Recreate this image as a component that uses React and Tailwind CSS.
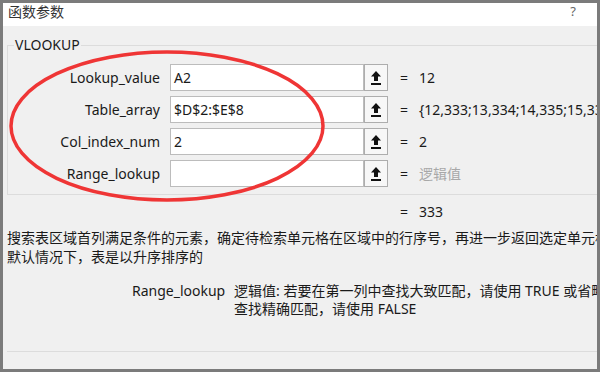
import React from 'react'

const rows = [
  { label: 'Lookup_value', value: 'A2', result: '12' },
  { label: 'Table_array', value: '$D$2:$E$8', result: '{12,333;13,334;14,335;15,336;16,337;17,338;18,339}' },
  { label: 'Col_index_num', value: '2', result: '2' },
  { label: 'Range_lookup', value: '', result: '逻辑值', muted: true },
]

function RefIcon() {
  return (
    <svg width="10" height="14" viewBox="0 0 10 14">
      <path d="M5 0 L10 5.5 L7 5.5 L7 10 L3 10 L3 5.5 L0 5.5 Z" fill="#111" />
      <rect x="0" y="12" width="10" height="2" fill="#111" />
    </svg>
  )
}

export default function App() {
  return (
    <div
      className="relative w-[600px] h-[372px] bg-[#7b7b7b] p-[3px] overflow-hidden text-[#1a1a1a]"
      style={{ fontFamily: '"Noto Sans", "Noto Sans CJK SC", sans-serif' }}
    >
      <div className="flex flex-col h-full bg-[#f0f0f0] overflow-hidden">
        {/* Title bar */}
        <div className="h-[23px] shrink-0 bg-white flex items-start justify-between pl-[5px] pr-[21px]">
          <span className="text-[14px] leading-[17px] text-[#333]">函数参数</span>
          <span className="text-[13px] leading-[17px] text-[#666]">?</span>
        </div>

        {/* Arguments group */}
        <fieldset className="mt-[9px] ml-[4px] w-[620px] shrink-0 border border-[#dcdcdc] pb-[7px]">
          <legend className="ml-[6px] px-[1px] text-[14px] leading-[20px]">VLOOKUP</legend>
          <div className="mt-[9px] flex flex-col gap-[5px]">
            {rows.map((r) => (
              <div key={r.label} className="flex items-center h-[27px] text-[14px] whitespace-nowrap">
                <div className="w-[152px] text-right">{r.label}</div>
                <div className="ml-[10px] w-[194px] h-[27px] bg-white border border-[#bcbcbc] px-[3px] leading-[25px]">
                  {r.value}
                </div>
                <div className="w-[24px] h-[27px] border border-[#adadad] bg-[#f7f7f7] flex items-center justify-center">
                  <RefIcon />
                </div>
                <span className="ml-[12px] w-[19px]">=</span>
                <span className={r.muted ? 'text-[#a8a8a8]' : ''}>{r.result}</span>
              </div>
            ))}
          </div>
        </fieldset>

        {/* Result */}
        <div className="mt-[7px] pl-[397px] flex text-[14px] leading-[20px]">
          <span className="w-[19px]">=</span>
          <span>333</span>
        </div>

        {/* Function description */}
        <div className="mt-[6px] pl-[4px] text-[14px] leading-[19px] whitespace-nowrap">
          <div>搜索表区域首列满足条件的元素，确定待检索单元格在区域中的行序号，再进一步返回选定单元格的值。</div>
          <div>默认情况下，表是以升序排序的</div>
        </div>

        {/* Argument description */}
        <div className="mt-[16px] flex text-[14px] leading-[18px] whitespace-nowrap">
          <div className="w-[129px] shrink-0" />
          <div className="w-[102px] shrink-0">Range_lookup</div>
          <div>
            <div>逻辑值: 若要在第一列中查找大致匹配，请使用 TRUE 或省略；若要</div>
            <div>查找精确匹配，请使用 FALSE</div>
          </div>
        </div>

        <div className="mt-[33px] ml-[4px] border-t border-[#dcdcdc]" />
      </div>

      {/* Red annotation ellipse */}
      <svg className="absolute left-0 top-0 pointer-events-none" width="600" height="372">
        <ellipse cx="167" cy="126" rx="156" ry="74" fill="none" stroke="#ef3535" strokeWidth="3.5" />
      </svg>
    </div>
  )
}
